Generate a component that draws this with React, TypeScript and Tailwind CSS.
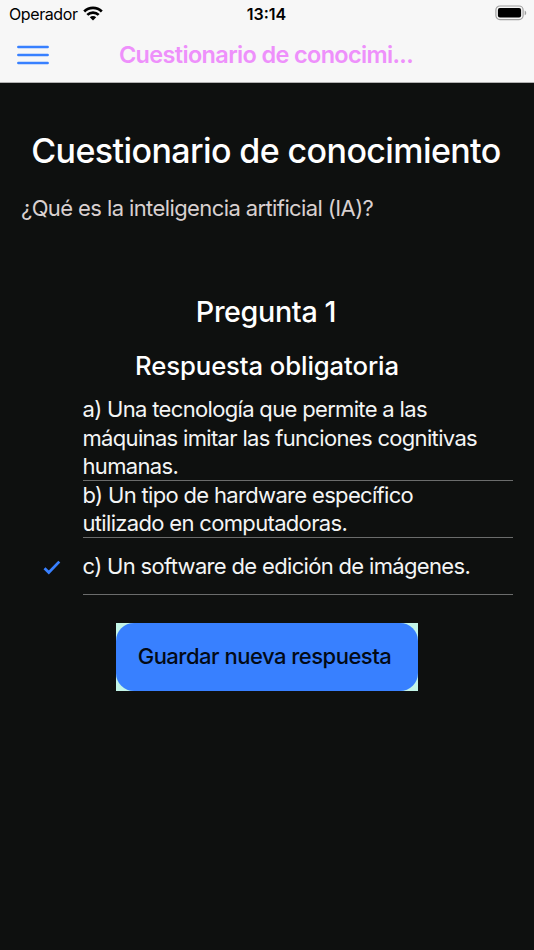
import { useState } from 'react';

const OPTIONS = [
  { id: 'a', lines: ['a) Una tecnología que permite a las', 'máquinas imitar las funciones cognitivas', 'humanas.'], height: 'h-[84px]' },
  { id: 'b', lines: ['b) Un tipo de hardware específico', 'utilizado en computadoras.'], height: 'h-[56px]' },
  { id: 'c', lines: ['c) Un software de edición de imágenes.'], height: 'h-[56px]' },
];

function StatusBar() {
  return (
    <div className="grid grid-cols-3 items-center h-7 pl-[9px] pr-[7px] text-black">
      <div className="flex items-center gap-[5px]">
        <span className="text-[16px] leading-7 tracking-[-0.4px]">Operador</span>
        <svg width="20" height="15" viewBox="0 0 20 15" fill="none" stroke="currentColor" strokeWidth="2.7" className="-mt-0.5">
          <path d="M1.2 5.5a12.6 12.6 0 0117.6 0" />
          <path d="M4.3 8.9a8.2 8.2 0 0111.4 0" />
          <path d="M10 14.5l-3.2-3.3a4.6 4.6 0 016.4 0z" fill="currentColor" stroke="none" />
        </svg>
      </div>
      <span className="text-center text-[16px] leading-7 font-semibold -ml-[3px]">13:14</span>
      <svg className="justify-self-end -mt-0.5" width="32" height="16" viewBox="0 0 32 16" fill="none">
        <rect x="0.9" y="1" width="27.2" height="13.6" rx="4" stroke="#a0a0a0" strokeWidth="1.2" />
        <rect x="2.9" y="3" width="23.2" height="9.6" rx="2" fill="#000" />
        <path d="M29.7 5.4c2 .8 2 4 0 4.8z" fill="#a0a0a0" />
      </svg>
    </div>
  );
}

export default function App() {
  const [selected, setSelected] = useState('c');

  return (
    <div className="min-h-[950px] w-full bg-[#0e100f] text-white font-['Inter',sans-serif] select-none">
      <header className="h-[83px] bg-[#f7f7f7] border-b border-[#b2b2b2]">
        <StatusBar />
        <div className="relative flex items-center justify-center h-[54px]">
          <button className="absolute left-[17px] top-[17px]" title="Menu">
            <svg width="32" height="20" viewBox="0 0 32 20" stroke="#3880ff" strokeWidth="2.4" strokeLinecap="round">
              <path d="M1.3 2h29.4M1.3 10h29.4M1.3 18h29.4" />
            </svg>
          </button>
          <h1 className="pr-0.5 text-[23.5px] font-semibold text-[#ee90fb] whitespace-nowrap tracking-[-0.66px]">Cuestionario de conocimi...</h1>
        </div>
      </header>

      <main className="flex flex-col">
        <h2 className="mt-[47px] pr-0.5 text-center text-[34px] leading-[42px] font-medium whitespace-nowrap tracking-[-0.6px]">Cuestionario de conocimiento</h2>
        <p className="mt-[22px] ml-[21px] text-[22px] leading-7 text-[#d9d0d0] whitespace-nowrap tracking-[-0.6px]">¿Qué es la inteligencia artificial (IA)?</p>

        <h3 className="mt-[72px] pr-0.5 text-center text-[28.7px] leading-9 font-medium tracking-[-0.35px]">Pregunta 1</h3>
        <h4 className="mt-[20px] text-center text-[25.7px] leading-8 font-medium tracking-[-0.1px]">Respuesta obligatoria</h4>

        <ul className="mt-[14px]">
          {OPTIONS.map(o => (
            <li key={o.id} onClick={() => setSelected(o.id)} className="flex items-stretch cursor-pointer">
              <div className="w-[83px] pl-[43px] flex items-center">
                {selected === o.id && (
                  <svg width="18" height="15" viewBox="0 0 18 15" fill="none" stroke="#3880ff" strokeWidth="2.8" className="mt-0.5">
                    <path d="M1.5 8.3l4.3 4.2L16.3 1.6" />
                  </svg>
                )}
              </div>
              <div className={`w-[430px] box-content border-b border-[#6b6c6c] flex flex-col justify-center ${o.height}`}>
                {o.lines.map(l => (
                  <span key={l} className="-ml-[0.5px] text-[22px] leading-[28.4px] tracking-[-0.67px] text-[#f4f5f5] whitespace-nowrap">{l}</span>
                ))}
              </div>
            </li>
          ))}
        </ul>

        <div className="mt-7 mx-auto w-[302px] h-[68px] bg-[#c3f5e8]">
          <button className="w-full h-full rounded-[18px] bg-[#3880ff] pr-[5px] pb-px text-[22px] font-medium tracking-[-0.5px] text-[#030a16] whitespace-nowrap">
            Guardar nueva respuesta
          </button>
        </div>
      </main>
    </div>
  );
}
